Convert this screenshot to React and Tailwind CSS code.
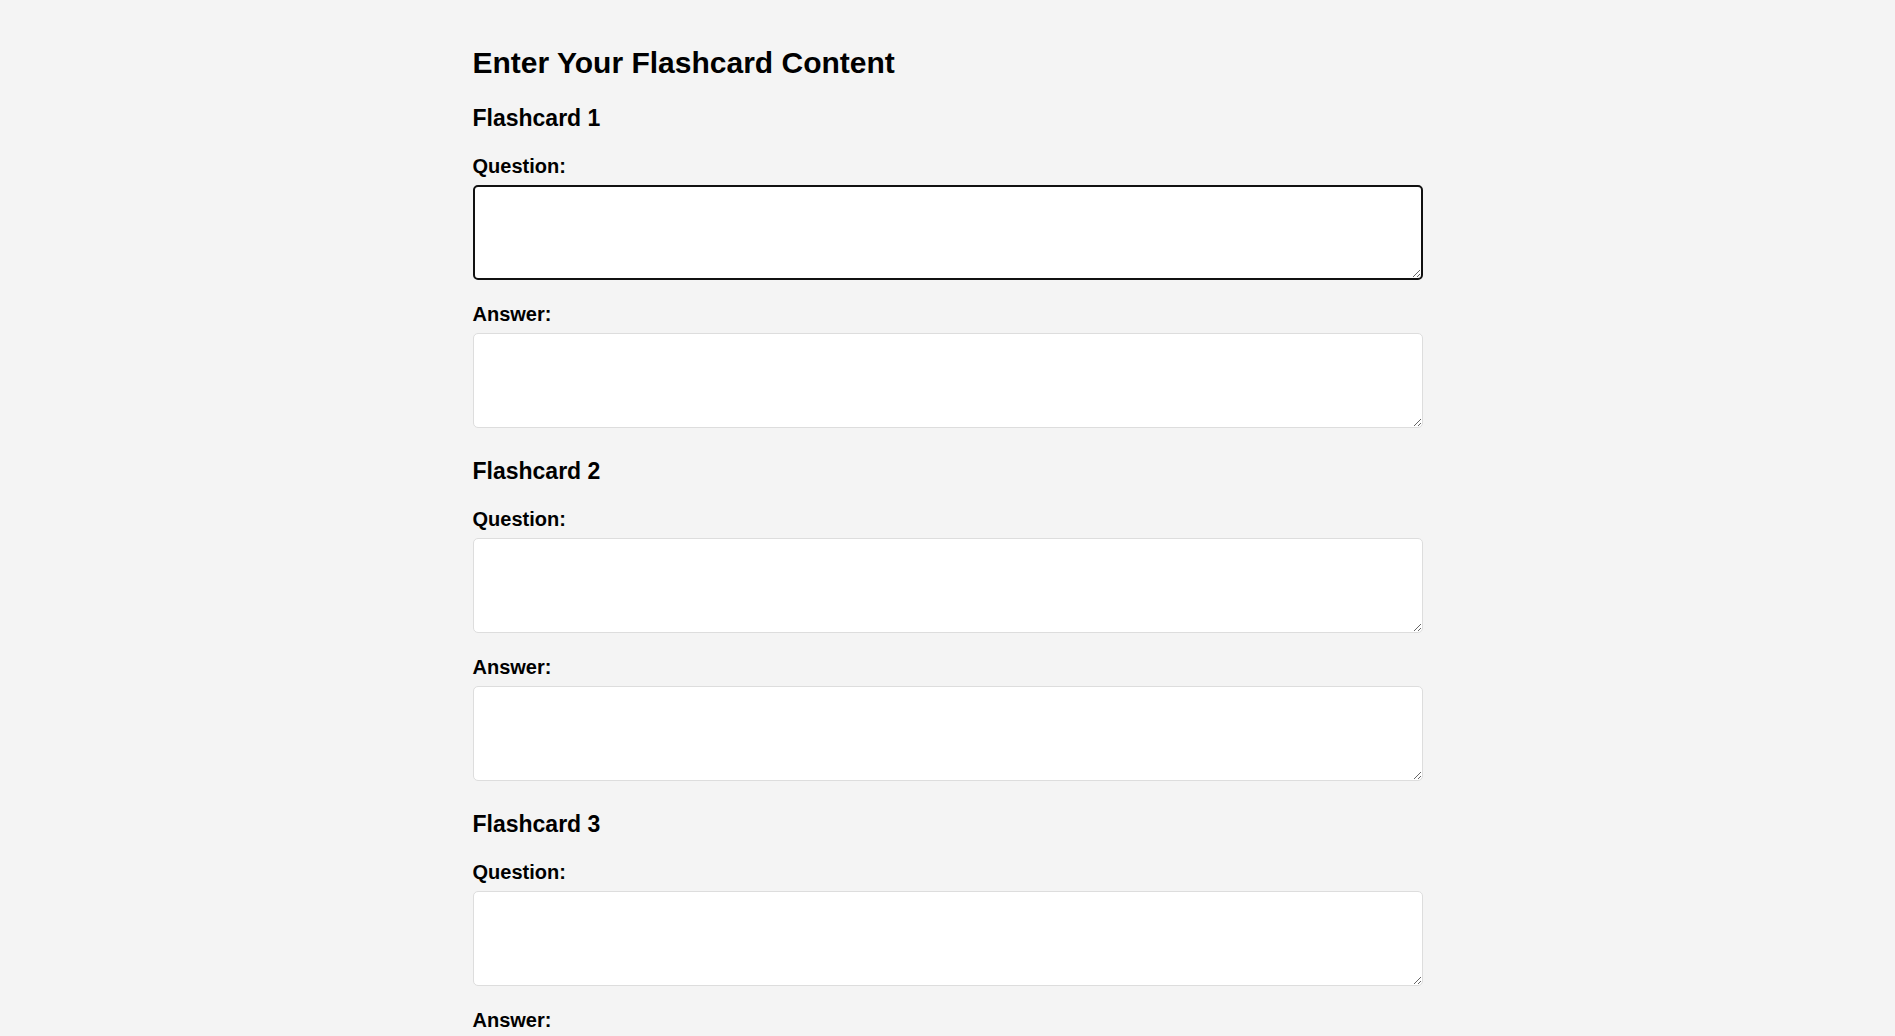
import React from "react";

const font = { fontFamily: '"Liberation Sans", Arial, sans-serif' };

function Card({ n, focusFirst }) {
  return (
    <div>
      <h3 className="text-[23px] leading-[26px] font-bold text-black mb-[24px]">Flashcard {n}</h3>
      <label className="block text-[20px] leading-[23px] font-bold text-black mb-[7px]">Question:</label>
      <textarea
        autoFocus={focusFirst}
        className={
          "block w-full h-[95px] rounded-[5px] bg-white p-[12px] text-[19px] focus:outline-none " +
          (focusFirst ? "border-2 border-[#111111]" : "border border-[#dddddd]")
        }
        style={font}
      />
      <label className="block text-[20px] leading-[23px] font-bold text-black mt-[23px] mb-[7px]">Answer:</label>
      <textarea
        className="block w-full h-[95px] rounded-[5px] bg-white p-[12px] text-[19px] border border-[#dddddd] focus:outline-none"
        style={font}
      />
    </div>
  );
}

export default function App() {
  return (
    <div className="min-h-screen bg-[#f4f4f4]" style={font}>
      <div className="w-[950px] mx-auto pt-[46px] pb-10">
        <h2 className="text-[30px] leading-[34px] font-bold text-black mb-[25px]">Enter Your Flashcard Content</h2>
        <div className="flex flex-col gap-[30px]">
          <Card n={1} focusFirst />
          <Card n={2} />
          <Card n={3} />
        </div>
      </div>
    </div>
  );
}
